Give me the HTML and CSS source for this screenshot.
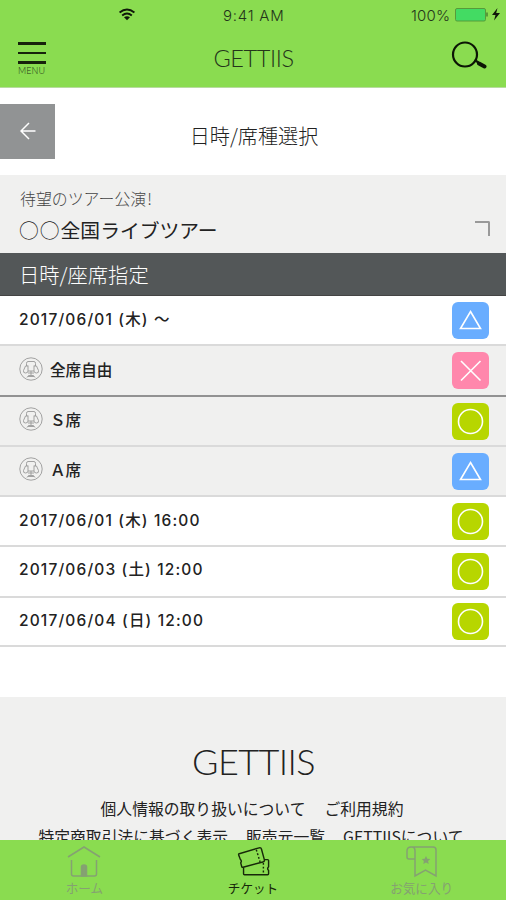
FILE: index.html
```html
<!DOCTYPE html>
<html lang="ja">
<head>
<meta charset="utf-8">
<meta name="viewport" content="width=device-width, initial-scale=1">
<title>GETTIIS</title>
<link rel="stylesheet" href="styles.css">
</head>
<body>
<svg class="defs" width="0" height="0">
  <symbol id="seat" viewBox="0 0 24 24"><circle cx="12" cy="12" r="11.2"/><path d="M7.500 9V6.500Q7.500 4.500 9 4.500h6q1.500 0 1.500 2V9M9 8.500v5.500h6V8.500M9 9H6.500L4.500 13.500Q4 16 6.500 16T9 14M15 9h2.500l2 4.500q.5 2.500-2 2.500T15 14M9 16h6M12 14v4M8 20.500l1.500-2h5l1.500 2M9 19.500h6"/></symbol>
  <symbol id="triangle" viewBox="0 0 37 37"><path d="M18.500 9.500 28.500 26.500H8.500Z"/></symbol>
  <symbol id="cross" viewBox="0 0 37 37"><path d="M9 9 28.500 28.500M28.500 9 9 28.500"/></symbol>
  <symbol id="circle" viewBox="0 0 37 37"><circle cx="18.500" cy="18.500" r="12"/></symbol>
</svg>
<div class="app">
  <header class="header">
    <div class="status">
      <svg class="wifi" viewBox="0 0 18 14"><path d="M1 4.800Q9-1.600 17 4.800M3.800 8Q9 3.800 14.200 8"/><path class="solid" d="M5.800 10Q9 7.500 12.200 10L9 13.200Z"/></svg>
      <span class="clock">9:41 AM</span>
      <span class="percent">100%</span>
      <svg class="battery" viewBox="0 0 46 16"><rect x=".5" y="1.500" width="30" height="12.500" rx="1.500"/><path class="tip" d="M31 5.500h2v4h-2z"/><path class="bolt" d="m42.500 1-5.500 7h3.500L39 13.500 45 6h-3.800Z"/></svg>
    </div>
    <div class="navbar">
      <div class="menu"><i></i><i></i><i></i><span>MENU</span></div>
      <h1>GETTIIS</h1>
      <svg class="search" viewBox="0 0 36 28"><circle cx="14" cy="13.500" r="12"/><path class="neck" d="m23.500 19 4 2.500"/><path class="handle" d="m28 22.500 5.500 3"/></svg>
    </div>
  </header>
  <div class="titlebar">
    <div class="back"><svg viewBox="0 0 16 18"><path d="M15.500 9H1M9 1 1 9l8 8"/></svg></div>
    <h2>日時/席種選択</h2>
  </div>
  <section class="event">
    <div class="lead">待望のツアー公演<span>!</span></div>
    <div class="name"><span>○○</span>全国ライブツアー</div>
    <i class="corner"></i>
  </section>
  <h3 class="section-title">日時/座席指定</h3>
  <ul class="list">
    <li><span class="date">2017/06/01 (木) ～</span><svg class="mark blue"><use href="#triangle"/></svg></li>
    <li class="seat group"><svg class="chair"><use href="#seat"/></svg><span class="label">全席自由</span><svg class="mark pink"><use href="#cross"/></svg></li>
    <li class="seat"><svg class="chair"><use href="#seat"/></svg><span class="label">Ｓ席</span><svg class="mark lime"><use href="#circle"/></svg></li>
    <li class="seat"><svg class="chair"><use href="#seat"/></svg><span class="label">Ａ席</span><svg class="mark blue"><use href="#triangle"/></svg></li>
    <li><span class="date">2017/06/01 (木) 16:00</span><svg class="mark lime"><use href="#circle"/></svg></li>
    <li class="raised"><span class="date">2017/06/03 (土) 12:00</span><svg class="mark lime"><use href="#circle"/></svg></li>
    <li><span class="date">2017/06/04 (日) 12:00</span><svg class="mark lime"><use href="#circle"/></svg></li>
  </ul>
  <footer class="footer">
    <div class="logo">GETTIIS</div>
    <div class="links one"><span>個人情報の取り扱いについて</span><span>ご利用規約</span></div>
    <div class="links two"><span>特定商取引法に基づく表示</span><span>販売元一覧</span><span>GETTIISについて</span></div>
  </footer>
  <nav class="tabs">
    <div class="tab"><svg viewBox="0 0 34 34"><path d="m1 12 16-10 16 10M4.500 15v14q0 2 2 2h21q2 0 2-2V15"/><path class="door" d="M14.500 31V22q0-2 2.500-2t2.500 2v9Z"/></svg><span>ホーム</span></div>
    <div class="tab active"><svg viewBox="0 0 36 34"><path d="m2.500 8.500 22-6.500q2-.5 2.500 1.500l3 11q.5 2-1.500 2.500l-21 5.500q-1.500.5-1.500-1l-1-3.500q1.500-2-.5-4l-1.500-4q-.5-1 0-1.500Z"/><path d="M8 23v6.500q0 1 1 1h24.500q1 0 1-1V26q-2-2 0-4v-6.500q0-1-1-1h-3"/><path class="dash" d="m21.500 4 4 13M29 18v12"/></svg><span>チケット</span></div>
    <div class="tab"><svg viewBox="0 0 34 34"><path d="M10 14H4q-2 0-2-2V6q0-4 4-4h22q3 0 3 3v26l-10.500-6L10 31V6q0-4-3-4"/><path class="star" d="m21 11 1.300 2.800 3 .3-2.200 2 .6 3-2.700-1.500-2.700 1.500.6-3-2.200-2 3-.3Z"/></svg><span>お気に入り</span></div>
  </nav>
</div>
</body>
</html>
```
FILE: styles.css
```css
* { box-sizing: border-box; margin: 0; padding: 0; }
body { font-family: "Noto Sans CJK JP", sans-serif; color: #222; background: #fff; }
svg { display: block; fill: none; stroke: currentColor; flex: none; }
.defs { position: absolute; }
.app { width: 506px; height: 900px; overflow: hidden; display: flex; flex-direction: column; }
.header { height: 88px; flex: none; background: #8adc50; border-bottom: 1px solid #b8dba0; color: #24351a; }
.status { height: 31px; display: grid; grid-template-columns: 118px 105px 188px 44px 51px; align-items: center; font: 300 15px/31px Inter, sans-serif; }
.wifi { width: 18px; height: 13px; margin: -3px 0 0 118px; stroke-width: 2; grid-column: 1; color: #10180a; }
.wifi .solid { fill: currentColor; stroke: none; }
.clock { grid-column: 3; white-space: nowrap; letter-spacing: .75px; }
.percent { grid-column: 4; letter-spacing: .2px; }
.battery { width: 46px; height: 16px; stroke: #579b3a; grid-column: 5; margin-top: -2px; }
.battery rect { fill: #43db63; }
.battery .tip { fill: #579b3a; stroke: none; }
.battery .bolt { fill: #10180a; stroke: none; }
.navbar { height: 56px; display: grid; grid-template-columns: 54px 1fr 54px; padding: 11px 0 0; }
.menu { width: 28px; margin-left: 18px; display: flex; flex-direction: column; gap: 7px; font: 300 9px/9px Lato, sans-serif; }
.menu i { height: 2.500px; background: #17220c; flex: none; }
.menu span { margin-top: -5px; letter-spacing: .1px; }
h1 { font: 300 23.500px/32px Lato, sans-serif; text-align: center; letter-spacing: -.4px; padding-left: 1px; }
.search { width: 36px; height: 28px; margin: -1px 0 0 -1px; stroke-width: 2.200; color: #0c1605; }
.search .handle { stroke-width: 4; stroke-linecap: round; }
.titlebar { height: 87px; flex: none; display: grid; grid-template-columns: 56px 396px 54px; align-items: center; }
.back { width: 55px; height: 55px; margin-top: -1px; background: #919394; color: #fff; display: flex; align-items: center; padding-left: 20px; }
.back svg { width: 16px; height: 18px; stroke-width: 1.500; }
h2 { font-weight: 300; font-size: 20.100px; line-height: 28px; text-align: center; margin-top: 9px; color: #222; }
.event { height: 78px; flex: none; background: #f0f0ef; display: grid; grid-template-columns: 1fr 32px; grid-template-rows: 34px 1fr; padding-left: 20px; }
.lead { grid-column: 1; font-size: 15.900px; font-weight: 300; line-height: 47px; color: #444; }
.lead span { margin-left: 1px; }
.name { grid-column: 1; grid-row: 2; font-size: 19.800px; line-height: 41px; color: #222; margin-left: -1px; }
.name span { font-weight: 300; letter-spacing: 1px; }
.corner { grid-column: 2; grid-row: 2; width: 15px; height: 15px; margin: 12px 0 0 1px; border: solid #999; border-width: 2px 2px 0 0; border-top-right-radius: 2px; }
.section-title { height: 43px; flex: none; background: #535758; border-bottom: 1px solid #444; color: #fff; font-weight: 300; font-size: 20.300px; line-height: 43px; padding-left: 19px; }
.list { list-style: none; height: 351px; flex: none; display: grid; grid-template-rows: 50px 51px 50px 50px 50px 51px 49px; }
.list li { display: flex; align-items: center; padding: 0 17px 0 19px; border-bottom: 2px solid #dadada; }
.list .seat { background: #f0f0ef; }
.list .group { border-bottom-color: #929292; }
.date { font: 500 15.500px/30px Inter, "Noto Sans CJK JP", sans-serif; letter-spacing: 1.150px; margin-bottom: 1px; }
.raised .date { margin-bottom: 4px; }
.chair { width: 24px; height: 24px; color: #999; margin: 0 7px 4px 0; stroke-width: .9; }
.label { font-size: 15.600px; font-weight: 500; margin-bottom: 4px; }
.mark { width: 37px; height: 37px; margin-left: auto; border-radius: 6px; color: #fff; stroke-width: 1.600; }
.blue { background: #69adff; }
.pink { background: #ff87ac; }
.lime { background: #b7d600; }
.footer { height: 143px; margin-top: 50px; flex: none; background: #f0f0ef; overflow: hidden; }
.logo { font: 300 36px/44px Lato, sans-serif; letter-spacing: -.6px; text-align: center; margin-top: 42px; padding-left: 1px; }
.links { display: flex; justify-content: center; gap: 18px; font-size: 15.800px; line-height: 28px; white-space: nowrap; }
.links.one { margin-top: 12px; gap: 19px; padding-right: 2px; }
.links.two { padding-right: 4px; }
.tabs { height: 60px; flex: none; background: #8adc50; display: grid; grid-template-columns: repeat(3, 1fr); color: #85a172; }
.tab { display: flex; flex-direction: column; align-items: center; padding-top: 5px; font-size: 12.600px; line-height: 17px; }
.tab svg { width: 34px; height: 34px; stroke-width: 1.500; }
.tab.active { color: #172809; }
.door { fill: currentColor; }
.star { fill: currentColor; stroke: none; }
.dash { stroke-dasharray: 2 2; }
```
